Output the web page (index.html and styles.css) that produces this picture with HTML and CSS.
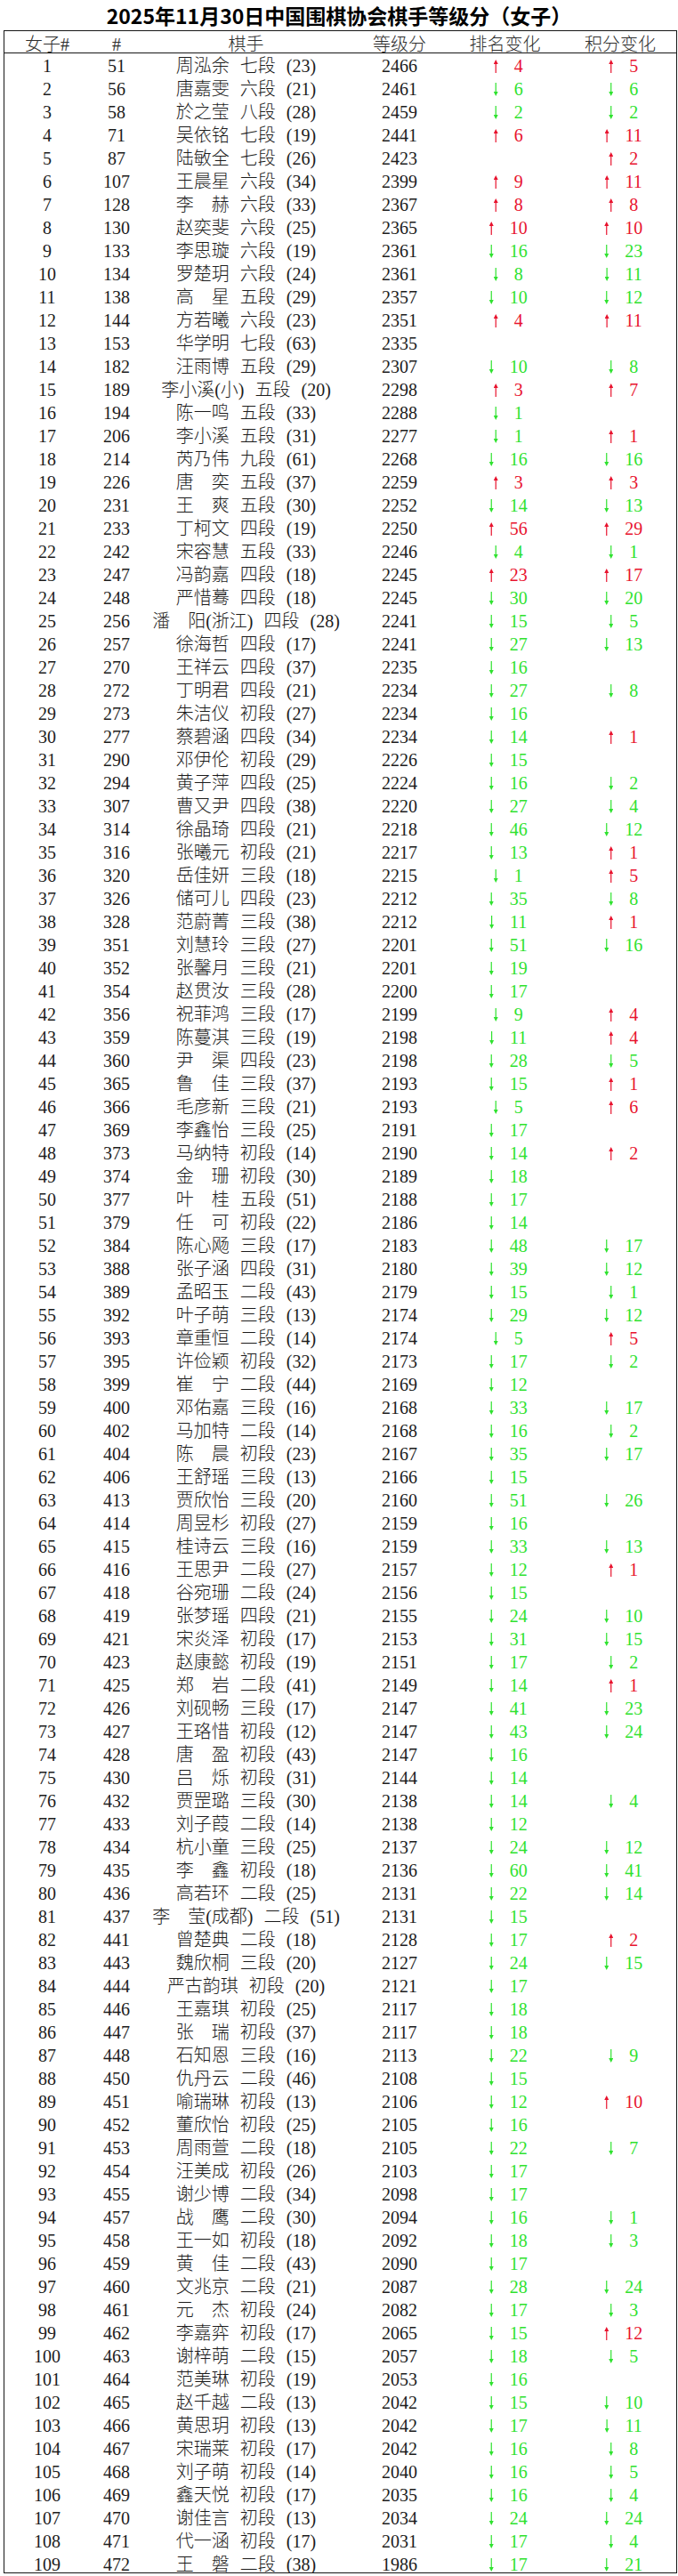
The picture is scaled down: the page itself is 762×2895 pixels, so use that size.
FILE: index.html
```html
<!DOCTYPE html>
<html lang="zh-CN">
<head>
<meta charset="utf-8">
<title>2025年11月30日中国围棋协会棋手等级分（女子）</title>
<link rel="stylesheet" href="styles.css">
</head>
<body>
<h1 class="title">2025年11月30日中国围棋协会棋手等级分（女子）</h1>
<div class="board">
  <div class="head"><span>女子#</span><span>#</span><span>棋手</span><span>等级分</span><span>排名变化</span><span>积分变化</span></div>
  <div class="rows">
    <div class="r"><span>1</span><span>51</span><span class="nm">周泓余 七段 (23)</span><span>2466</span><span class="u">4</span><span class="u">5</span></div>
    <div class="r"><span>2</span><span>56</span><span class="nm">唐嘉雯 六段 (21)</span><span>2461</span><span class="d">6</span><span class="d">6</span></div>
    <div class="r"><span>3</span><span>58</span><span class="nm">於之莹 八段 (28)</span><span>2459</span><span class="d">2</span><span class="d">2</span></div>
    <div class="r"><span>4</span><span>71</span><span class="nm">吴依铭 七段 (19)</span><span>2441</span><span class="u">6</span><span class="u">11</span></div>
    <div class="r"><span>5</span><span>87</span><span class="nm">陆敏全 七段 (26)</span><span>2423</span><span></span><span class="u">2</span></div>
    <div class="r"><span>6</span><span>107</span><span class="nm">王晨星 六段 (34)</span><span>2399</span><span class="u">9</span><span class="u">11</span></div>
    <div class="r"><span>7</span><span>128</span><span class="nm">李　赫 六段 (33)</span><span>2367</span><span class="u">8</span><span class="u">8</span></div>
    <div class="r"><span>8</span><span>130</span><span class="nm">赵奕斐 六段 (25)</span><span>2365</span><span class="u">10</span><span class="u">10</span></div>
    <div class="r"><span>9</span><span>133</span><span class="nm">李思璇 六段 (19)</span><span>2361</span><span class="d">16</span><span class="d">23</span></div>
    <div class="r"><span>10</span><span>134</span><span class="nm">罗楚玥 六段 (24)</span><span>2361</span><span class="d">8</span><span class="d">11</span></div>
    <div class="r"><span>11</span><span>138</span><span class="nm">高　星 五段 (29)</span><span>2357</span><span class="d">10</span><span class="d">12</span></div>
    <div class="r"><span>12</span><span>144</span><span class="nm">方若曦 六段 (23)</span><span>2351</span><span class="u">4</span><span class="u">11</span></div>
    <div class="r"><span>13</span><span>153</span><span class="nm">华学明 七段 (63)</span><span>2335</span><span></span><span></span></div>
    <div class="r"><span>14</span><span>182</span><span class="nm">汪雨博 五段 (29)</span><span>2307</span><span class="d">10</span><span class="d">8</span></div>
    <div class="r"><span>15</span><span>189</span><span class="nm">李小溪(小) 五段 (20)</span><span>2298</span><span class="u">3</span><span class="u">7</span></div>
    <div class="r"><span>16</span><span>194</span><span class="nm">陈一鸣 五段 (33)</span><span>2288</span><span class="d">1</span><span></span></div>
    <div class="r"><span>17</span><span>206</span><span class="nm">李小溪 五段 (31)</span><span>2277</span><span class="d">1</span><span class="u">1</span></div>
    <div class="r"><span>18</span><span>214</span><span class="nm">芮乃伟 九段 (61)</span><span>2268</span><span class="d">16</span><span class="d">16</span></div>
    <div class="r"><span>19</span><span>226</span><span class="nm">唐　奕 五段 (37)</span><span>2259</span><span class="u">3</span><span class="u">3</span></div>
    <div class="r"><span>20</span><span>231</span><span class="nm">王　爽 五段 (30)</span><span>2252</span><span class="d">14</span><span class="d">13</span></div>
    <div class="r"><span>21</span><span>233</span><span class="nm">丁柯文 四段 (19)</span><span>2250</span><span class="u">56</span><span class="u">29</span></div>
    <div class="r"><span>22</span><span>242</span><span class="nm">宋容慧 五段 (33)</span><span>2246</span><span class="d">4</span><span class="d">1</span></div>
    <div class="r"><span>23</span><span>247</span><span class="nm">冯韵嘉 四段 (18)</span><span>2245</span><span class="u">23</span><span class="u">17</span></div>
    <div class="r"><span>24</span><span>248</span><span class="nm">严惜蓦 四段 (18)</span><span>2245</span><span class="d">30</span><span class="d">20</span></div>
    <div class="r"><span>25</span><span>256</span><span class="nm">潘　阳(浙江) 四段 (28)</span><span>2241</span><span class="d">15</span><span class="d">5</span></div>
    <div class="r"><span>26</span><span>257</span><span class="nm">徐海哲 四段 (17)</span><span>2241</span><span class="d">27</span><span class="d">13</span></div>
    <div class="r"><span>27</span><span>270</span><span class="nm">王祥云 四段 (37)</span><span>2235</span><span class="d">16</span><span></span></div>
    <div class="r"><span>28</span><span>272</span><span class="nm">丁明君 四段 (21)</span><span>2234</span><span class="d">27</span><span class="d">8</span></div>
    <div class="r"><span>29</span><span>273</span><span class="nm">朱洁仪 初段 (27)</span><span>2234</span><span class="d">16</span><span></span></div>
    <div class="r"><span>30</span><span>277</span><span class="nm">蔡碧涵 四段 (34)</span><span>2234</span><span class="d">14</span><span class="u">1</span></div>
    <div class="r"><span>31</span><span>290</span><span class="nm">邓伊伦 初段 (29)</span><span>2226</span><span class="d">15</span><span></span></div>
    <div class="r"><span>32</span><span>294</span><span class="nm">黄子萍 四段 (25)</span><span>2224</span><span class="d">16</span><span class="d">2</span></div>
    <div class="r"><span>33</span><span>307</span><span class="nm">曹又尹 四段 (38)</span><span>2220</span><span class="d">27</span><span class="d">4</span></div>
    <div class="r"><span>34</span><span>314</span><span class="nm">徐晶琦 四段 (21)</span><span>2218</span><span class="d">46</span><span class="d">12</span></div>
    <div class="r"><span>35</span><span>316</span><span class="nm">张曦元 初段 (21)</span><span>2217</span><span class="d">13</span><span class="u">1</span></div>
    <div class="r"><span>36</span><span>320</span><span class="nm">岳佳妍 三段 (18)</span><span>2215</span><span class="d">1</span><span class="u">5</span></div>
    <div class="r"><span>37</span><span>326</span><span class="nm">储可儿 四段 (23)</span><span>2212</span><span class="d">35</span><span class="d">8</span></div>
    <div class="r"><span>38</span><span>328</span><span class="nm">范蔚菁 三段 (38)</span><span>2212</span><span class="d">11</span><span class="u">1</span></div>
    <div class="r"><span>39</span><span>351</span><span class="nm">刘慧玲 三段 (27)</span><span>2201</span><span class="d">51</span><span class="d">16</span></div>
    <div class="r"><span>40</span><span>352</span><span class="nm">张馨月 三段 (21)</span><span>2201</span><span class="d">19</span><span></span></div>
    <div class="r"><span>41</span><span>354</span><span class="nm">赵贯汝 三段 (28)</span><span>2200</span><span class="d">17</span><span></span></div>
    <div class="r"><span>42</span><span>356</span><span class="nm">祝菲鸿 三段 (17)</span><span>2199</span><span class="d">9</span><span class="u">4</span></div>
    <div class="r"><span>43</span><span>359</span><span class="nm">陈蔓淇 三段 (19)</span><span>2198</span><span class="d">11</span><span class="u">4</span></div>
    <div class="r"><span>44</span><span>360</span><span class="nm">尹　渠 四段 (23)</span><span>2198</span><span class="d">28</span><span class="d">5</span></div>
    <div class="r"><span>45</span><span>365</span><span class="nm">鲁　佳 三段 (37)</span><span>2193</span><span class="d">15</span><span class="u">1</span></div>
    <div class="r"><span>46</span><span>366</span><span class="nm">毛彦新 三段 (21)</span><span>2193</span><span class="d">5</span><span class="u">6</span></div>
    <div class="r"><span>47</span><span>369</span><span class="nm">李鑫怡 三段 (25)</span><span>2191</span><span class="d">17</span><span></span></div>
    <div class="r"><span>48</span><span>373</span><span class="nm">马纳特 初段 (14)</span><span>2190</span><span class="d">14</span><span class="u">2</span></div>
    <div class="r"><span>49</span><span>374</span><span class="nm">金　珊 初段 (30)</span><span>2189</span><span class="d">18</span><span></span></div>
    <div class="r"><span>50</span><span>377</span><span class="nm">叶　桂 五段 (51)</span><span>2188</span><span class="d">17</span><span></span></div>
    <div class="r"><span>51</span><span>379</span><span class="nm">任　可 初段 (22)</span><span>2186</span><span class="d">14</span><span></span></div>
    <div class="r"><span>52</span><span>384</span><span class="nm">陈心飏 三段 (17)</span><span>2183</span><span class="d">48</span><span class="d">17</span></div>
    <div class="r"><span>53</span><span>388</span><span class="nm">张子涵 四段 (31)</span><span>2180</span><span class="d">39</span><span class="d">12</span></div>
    <div class="r"><span>54</span><span>389</span><span class="nm">孟昭玉 二段 (43)</span><span>2179</span><span class="d">15</span><span class="d">1</span></div>
    <div class="r"><span>55</span><span>392</span><span class="nm">叶子萌 三段 (13)</span><span>2174</span><span class="d">29</span><span class="d">12</span></div>
    <div class="r"><span>56</span><span>393</span><span class="nm">章重恒 二段 (14)</span><span>2174</span><span class="d">5</span><span class="u">5</span></div>
    <div class="r"><span>57</span><span>395</span><span class="nm">许俭颖 初段 (32)</span><span>2173</span><span class="d">17</span><span class="d">2</span></div>
    <div class="r"><span>58</span><span>399</span><span class="nm">崔　宁 二段 (44)</span><span>2169</span><span class="d">12</span><span></span></div>
    <div class="r"><span>59</span><span>400</span><span class="nm">邓佑嘉 三段 (16)</span><span>2168</span><span class="d">33</span><span class="d">17</span></div>
    <div class="r"><span>60</span><span>402</span><span class="nm">马加特 二段 (14)</span><span>2168</span><span class="d">16</span><span class="d">2</span></div>
    <div class="r"><span>61</span><span>404</span><span class="nm">陈　晨 初段 (23)</span><span>2167</span><span class="d">35</span><span class="d">17</span></div>
    <div class="r"><span>62</span><span>406</span><span class="nm">王舒瑶 三段 (13)</span><span>2166</span><span class="d">15</span><span></span></div>
    <div class="r"><span>63</span><span>413</span><span class="nm">贾欣怡 三段 (20)</span><span>2160</span><span class="d">51</span><span class="d">26</span></div>
    <div class="r"><span>64</span><span>414</span><span class="nm">周昱杉 初段 (27)</span><span>2159</span><span class="d">16</span><span></span></div>
    <div class="r"><span>65</span><span>415</span><span class="nm">桂诗云 三段 (16)</span><span>2159</span><span class="d">33</span><span class="d">13</span></div>
    <div class="r"><span>66</span><span>416</span><span class="nm">王思尹 二段 (27)</span><span>2157</span><span class="d">12</span><span class="u">1</span></div>
    <div class="r"><span>67</span><span>418</span><span class="nm">谷宛珊 二段 (24)</span><span>2156</span><span class="d">15</span><span></span></div>
    <div class="r"><span>68</span><span>419</span><span class="nm">张梦瑶 四段 (21)</span><span>2155</span><span class="d">24</span><span class="d">10</span></div>
    <div class="r"><span>69</span><span>421</span><span class="nm">宋炎泽 初段 (17)</span><span>2153</span><span class="d">31</span><span class="d">15</span></div>
    <div class="r"><span>70</span><span>423</span><span class="nm">赵康懿 初段 (19)</span><span>2151</span><span class="d">17</span><span class="d">2</span></div>
    <div class="r"><span>71</span><span>425</span><span class="nm">郑　岩 二段 (41)</span><span>2149</span><span class="d">14</span><span class="u">1</span></div>
    <div class="r"><span>72</span><span>426</span><span class="nm">刘砚畅 三段 (17)</span><span>2147</span><span class="d">41</span><span class="d">23</span></div>
    <div class="r"><span>73</span><span>427</span><span class="nm">王珞惜 初段 (12)</span><span>2147</span><span class="d">43</span><span class="d">24</span></div>
    <div class="r"><span>74</span><span>428</span><span class="nm">唐　盈 初段 (43)</span><span>2147</span><span class="d">16</span><span></span></div>
    <div class="r"><span>75</span><span>430</span><span class="nm">吕　烁 初段 (31)</span><span>2144</span><span class="d">14</span><span></span></div>
    <div class="r"><span>76</span><span>432</span><span class="nm">贾罡璐 三段 (30)</span><span>2138</span><span class="d">14</span><span class="d">4</span></div>
    <div class="r"><span>77</span><span>433</span><span class="nm">刘子葭 二段 (14)</span><span>2138</span><span class="d">12</span><span></span></div>
    <div class="r"><span>78</span><span>434</span><span class="nm">杭小童 三段 (25)</span><span>2137</span><span class="d">24</span><span class="d">12</span></div>
    <div class="r"><span>79</span><span>435</span><span class="nm">李　鑫 初段 (18)</span><span>2136</span><span class="d">60</span><span class="d">41</span></div>
    <div class="r"><span>80</span><span>436</span><span class="nm">高若环 二段 (25)</span><span>2131</span><span class="d">22</span><span class="d">14</span></div>
    <div class="r"><span>81</span><span>437</span><span class="nm">李　莹(成都) 二段 (51)</span><span>2131</span><span class="d">15</span><span></span></div>
    <div class="r"><span>82</span><span>441</span><span class="nm">曾楚典 二段 (18)</span><span>2128</span><span class="d">17</span><span class="u">2</span></div>
    <div class="r"><span>83</span><span>443</span><span class="nm">魏欣桐 三段 (20)</span><span>2127</span><span class="d">24</span><span class="d">15</span></div>
    <div class="r"><span>84</span><span>444</span><span class="nm">严古韵琪 初段 (20)</span><span>2121</span><span class="d">17</span><span></span></div>
    <div class="r"><span>85</span><span>446</span><span class="nm">王嘉琪 初段 (25)</span><span>2117</span><span class="d">18</span><span></span></div>
    <div class="r"><span>86</span><span>447</span><span class="nm">张　瑞 初段 (37)</span><span>2117</span><span class="d">18</span><span></span></div>
    <div class="r"><span>87</span><span>448</span><span class="nm">石知恩 三段 (16)</span><span>2113</span><span class="d">22</span><span class="d">9</span></div>
    <div class="r"><span>88</span><span>450</span><span class="nm">仇丹云 二段 (46)</span><span>2108</span><span class="d">15</span><span></span></div>
    <div class="r"><span>89</span><span>451</span><span class="nm">喻瑞琳 初段 (13)</span><span>2106</span><span class="d">12</span><span class="u">10</span></div>
    <div class="r"><span>90</span><span>452</span><span class="nm">董欣怡 初段 (25)</span><span>2105</span><span class="d">16</span><span></span></div>
    <div class="r"><span>91</span><span>453</span><span class="nm">周雨萱 二段 (18)</span><span>2105</span><span class="d">22</span><span class="d">7</span></div>
    <div class="r"><span>92</span><span>454</span><span class="nm">汪美成 初段 (26)</span><span>2103</span><span class="d">17</span><span></span></div>
    <div class="r"><span>93</span><span>455</span><span class="nm">谢少博 二段 (34)</span><span>2098</span><span class="d">17</span><span></span></div>
    <div class="r"><span>94</span><span>457</span><span class="nm">战　鹰 二段 (30)</span><span>2094</span><span class="d">16</span><span class="d">1</span></div>
    <div class="r"><span>95</span><span>458</span><span class="nm">王一如 初段 (18)</span><span>2092</span><span class="d">18</span><span class="d">3</span></div>
    <div class="r"><span>96</span><span>459</span><span class="nm">黄　佳 二段 (43)</span><span>2090</span><span class="d">17</span><span></span></div>
    <div class="r"><span>97</span><span>460</span><span class="nm">文兆京 二段 (21)</span><span>2087</span><span class="d">28</span><span class="d">24</span></div>
    <div class="r"><span>98</span><span>461</span><span class="nm">元　杰 初段 (24)</span><span>2082</span><span class="d">17</span><span class="d">3</span></div>
    <div class="r"><span>99</span><span>462</span><span class="nm">李嘉弈 初段 (17)</span><span>2065</span><span class="d">15</span><span class="u">12</span></div>
    <div class="r"><span>100</span><span>463</span><span class="nm">谢梓萌 二段 (15)</span><span>2057</span><span class="d">18</span><span class="d">5</span></div>
    <div class="r"><span>101</span><span>464</span><span class="nm">范美琳 初段 (19)</span><span>2053</span><span class="d">16</span><span></span></div>
    <div class="r"><span>102</span><span>465</span><span class="nm">赵千越 二段 (13)</span><span>2042</span><span class="d">15</span><span class="d">10</span></div>
    <div class="r"><span>103</span><span>466</span><span class="nm">黄思玥 初段 (13)</span><span>2042</span><span class="d">17</span><span class="d">11</span></div>
    <div class="r"><span>104</span><span>467</span><span class="nm">宋瑞莱 初段 (17)</span><span>2042</span><span class="d">16</span><span class="d">8</span></div>
    <div class="r"><span>105</span><span>468</span><span class="nm">刘子萌 初段 (14)</span><span>2040</span><span class="d">16</span><span class="d">5</span></div>
    <div class="r"><span>106</span><span>469</span><span class="nm">鑫天悦 初段 (17)</span><span>2035</span><span class="d">16</span><span class="d">4</span></div>
    <div class="r"><span>107</span><span>470</span><span class="nm">谢佳言 初段 (13)</span><span>2034</span><span class="d">24</span><span class="d">24</span></div>
    <div class="r"><span>108</span><span>471</span><span class="nm">代一涵 初段 (17)</span><span>2031</span><span class="d">17</span><span class="d">4</span></div>
    <div class="r"><span>109</span><span>472</span><span class="nm">王　磐 二段 (38)</span><span>1986</span><span class="d">17</span><span class="d">21</span></div>
  </div>
</div>
</body>
</html>
```

FILE: styles.css
```css
* {
  box-sizing: border-box;
}

body {
  margin: 0;
  background: #ffffff;
  color: #1c1c1c;
  font-family: "Liberation Serif", "Noto Sans CJK SC", serif;
  font-size: 20px;
  font-weight: 300;
}

.title {
  margin: 0;
  height: 34px;
  line-height: 34px;
  text-align: center;
  font-family: "Noto Sans CJK SC", "Liberation Sans", sans-serif;
  font-size: 23px;
  font-weight: 700;
  color: #000000;
  white-space: nowrap;
}

.board {
  margin-left: 4px;
  width: 757px;
  border: 1px solid #161616;
}

.head,
.r {
  display: grid;
  grid-template-columns: 96px 60px 231px 114px 123px 131px;
  text-align: center;
  white-space: nowrap;
}

.head {
  height: 25px;
  padding-top: 5px;
  line-height: 20px;
  border-bottom: 1px solid #161616;
  color: #2e2e2e;
}

.head > :nth-child(6),
.r > :nth-child(6) {
  padding-left: 5px;
}

.rows {
  padding-top: 1px;
}

.r {
  height: 26px;
  line-height: 26px;
}

.r:last-child {
  height: 22px;
}

.nm {
  word-spacing: 7px;
}

.u {
  color: #e8132e;
}

.d {
  color: #2fe22f;
}

.u::before,
.d::before {
  content: "";
  display: inline-block;
  width: 5px;
  height: 15px;
  margin: 0 18px 0 7.5px;
  vertical-align: -1px;
  background: currentColor;
}

.u::before {
  clip-path: polygon(50% 0, 100% 34%, 62% 34%, 62% 100%, 38% 100%, 38% 34%, 0 34%);
}

.d::before {
  clip-path: polygon(38% 0, 62% 0, 62% 66%, 100% 66%, 50% 100%, 0 66%, 38% 66%);
}
```
